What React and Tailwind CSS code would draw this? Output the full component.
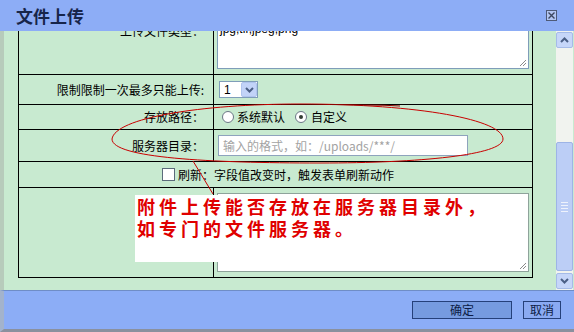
import React from 'react';

const Radio = ({ checked }) => (
  <span className="w-[12px] h-[12px] rounded-full border border-[#6b7785] bg-white flex items-center justify-center shrink-0">
    {checked && <span className="w-[4px] h-[4px] rounded-full bg-[#333d33]" />}
  </span>
);

const Grip = () => (
  <svg className="absolute right-[1px] bottom-[1px]" width="9" height="9" viewBox="0 0 9 9">
    <path d="M8 2 L2 8 M8 5 L5 8" stroke="#8a8a8a" strokeWidth="1" />
  </svg>
);

const Row = ({ h, label, labelClass = 'items-center', children, cellClass = 'items-center' }) => (
  <div className={`flex border-b border-black ${h}`}>
    <div className={`w-[195px] shrink-0 border-r border-black flex justify-end pr-[9px] ${labelClass}`}>
      {label}
    </div>
    <div className={`flex-1 flex ${cellClass}`}>{children}</div>
  </div>
);

const Chevron = ({ up }) => (
  <svg width="9" height="6" viewBox="0 0 9 6">
    <path d={up ? 'M1 5 L4.5 1.5 L8 5' : 'M1 1 L4.5 4.5 L8 1'} fill="none" stroke="#4b5f86" strokeWidth="2" />
  </svg>
);

export default function App() {
  return (
    <div className="relative w-[574px] h-[332px] overflow-hidden flex flex-col bg-[#c8ead0] text-[12px] text-black font-['Noto_Sans_CJK_SC',sans-serif]">
      {/* title bar */}
      <div className="h-[31px] shrink-0 bg-[#8dadf6] flex items-center justify-between pl-[16px] pr-[17px]">
        <span className="text-[17px] font-bold leading-none text-[#17254a]">文件上传</span>
        <span className="w-[11px] h-[11px] border border-[#4e5a78] bg-[#b3c6f2] flex items-center justify-center">
          <svg width="9" height="9" viewBox="0 0 9 9">
            <path d="M1.5 1.5 L7.5 7.5 M7.5 1.5 L1.5 7.5" stroke="#3c4660" strokeWidth="1.4" />
          </svg>
        </span>
      </div>

      {/* body */}
      <div className="flex flex-1 min-h-0 border-l-[4px] border-[#b7cbbb]">
        <div className="w-[552px] overflow-hidden">
          <div className="-mt-[46px] ml-[14px] w-[515px] border-x border-black">
            <Row h="h-[90px]" labelClass="items-start pt-[37px]" cellClass="items-start" label="上传文件类型：">
              <div className="relative mt-[35px] ml-[3px] w-[312px] h-[49px] bg-white border border-[#7f9db9] px-[2px] pt-[1px] font-['Liberation_Sans',sans-serif] text-[12px] leading-[14px]">
                jpg,tif,jpeg,png
                <Grip />
              </div>
            </Row>
            <Row h="h-[30px]" label="限制限制一次最多只能上传:">
              <div className="ml-[5px] w-[39px] h-[17px] bg-white border border-[#7f9db9] flex items-center justify-between font-['Liberation_Sans',sans-serif]">
                <span className="pl-[4px] text-[12px]">1</span>
                <span className="w-[16px] h-[15px] bg-[#c2d3f8] border border-[#b0c4ee] rounded-[2px] flex items-center justify-center">
                  <Chevron />
                </span>
              </div>
            </Row>
            <Row h="h-[25px]" label="存放路径：">
              <div className="flex items-center ml-[8px]">
                <Radio />
                <span className="ml-[3px]">系统默认</span>
                <span className="ml-[10px]"><Radio checked /></span>
                <span className="ml-[4px]">自定义</span>
              </div>
            </Row>
            <Row h="h-[32px]" label="服务器目录：">
              <div className="ml-[4px] w-[250px] h-[21px] bg-white border border-[#8ea3bd] flex items-center pl-[4px] text-[#a3a3a3]">
                输入的格式，如：/uploads/***/
              </div>
            </Row>
            <div className="h-[26px] border-b border-black flex items-center justify-center pl-[5px]">
              <span className="w-[13px] h-[13px] border border-[#5b6b7b] bg-white shrink-0" />
              <span className="ml-[3px]">刷新：字段值改变时，触发表单刷新动作</span>
            </div>
            <Row h="h-[90px]" label="" cellClass="items-start">
              <div className="relative mt-[5px] ml-[3px] w-[312px] h-[79px] bg-white border border-[#8ea39b]">
                <Grip />
              </div>
            </Row>
          </div>
        </div>

        {/* scrollbar */}
        <div className="w-[17px] shrink-0 bg-[#f1f3ef] flex flex-col py-[1px]">
          <div className="h-[16px] bg-[#c6d6f9] border border-[#a5bbe8] rounded-[2px] flex items-center justify-center">
            <Chevron up />
          </div>
          <div className="flex-1 flex flex-col justify-end pb-[2px]">
            <div className="h-[129px] bg-[#bccef6] border border-[#9db4e6] rounded-[2px] flex flex-col items-center justify-center gap-[2px]">
              <span className="w-[7px] h-px bg-[#eef2fc]" />
              <span className="w-[7px] h-px bg-[#eef2fc]" />
              <span className="w-[7px] h-px bg-[#eef2fc]" />
              <span className="w-[7px] h-px bg-[#eef2fc]" />
            </div>
          </div>
          <div className="h-[16px] bg-[#c6d6f9] border border-[#a5bbe8] rounded-[2px] flex items-center justify-center">
            <Chevron />
          </div>
        </div>
      </div>

      {/* footer */}
      <div className="h-[42px] shrink-0 bg-[#8cadf6] border-t border-[#6f8dc6] border-b-[3px] border-b-[#8a909e] border-l-[4px] border-l-[#a3b3cc] flex items-center justify-end pr-[13px] gap-[11px]">
        <button className="w-[100px] h-[18px] bg-[#769be0] border border-[#25407a] text-[12px] leading-none text-[#0d1c46]">确定</button>
        <button className="w-[38px] h-[18px] bg-[#8aaaf2] border border-[#25407a] text-[12px] leading-none text-[#0d1c46]">取消</button>
      </div>

      {/* annotation */}
      <div className="absolute left-[135px] top-[195px] w-[365px] h-[67px] bg-white pl-[2px] text-[18px] leading-[22px] font-bold tracking-[4px] text-[#e00000] font-['Noto_Sans_CJK_SC',serif]">
        <div>附件上传能否存放在服务器目录外，</div>
        <div>如专门的文件服务器。</div>
      </div>
      <svg className="absolute inset-0 pointer-events-none" width="574" height="332" viewBox="0 0 574 332">
        <path
          d="M112 139 C115 118 200 104 300 104 C420 104 503 120 503 139 C503 155 420 163 320 163 C210 163 112 158 112 139 Z"
          fill="none"
          stroke="#c80000"
          strokeWidth="1"
        />
        <path d="M330 104.5 C360 104.5 380 105 400 106" fill="none" stroke="#8a0000" strokeWidth="1.2" />
        <path d="M193 161 L213 194" stroke="#c80000" strokeWidth="1" />
      </svg>
    </div>
  );
}
